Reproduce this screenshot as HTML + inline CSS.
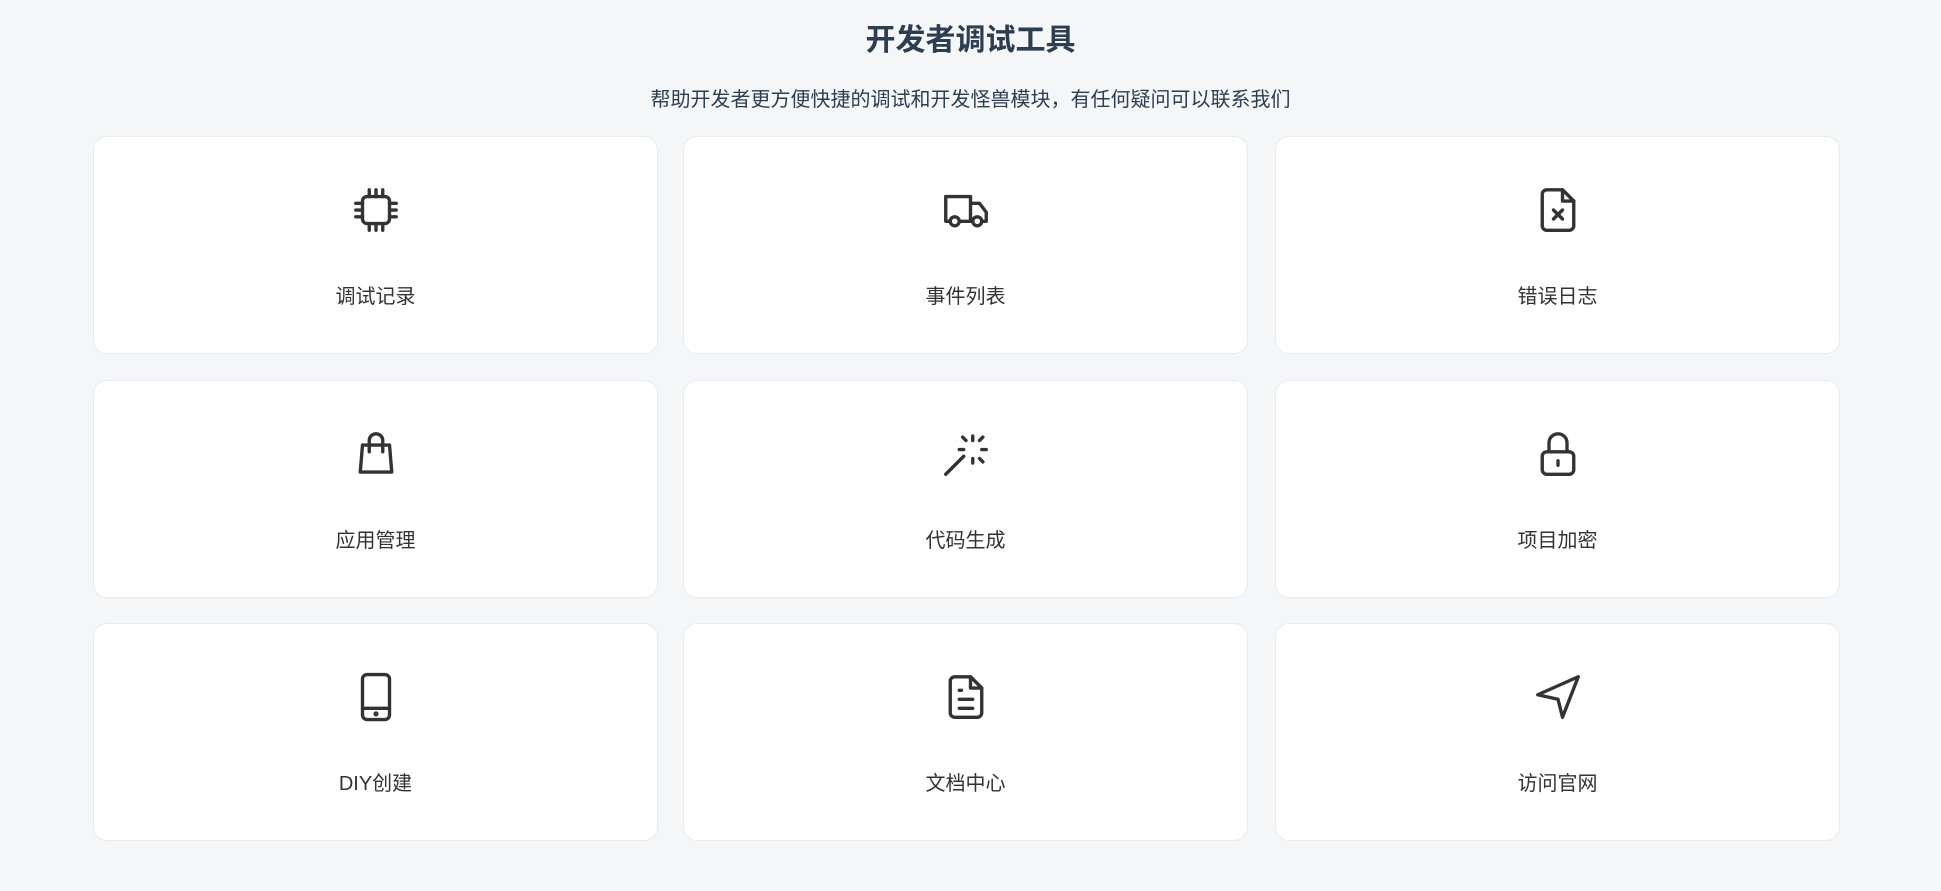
<!DOCTYPE html>
<html><head><meta charset="utf-8"><style>
html,body{margin:0;padding:0;background:#f5f6f8;width:1941px;height:891px;overflow:hidden;font-family:"Liberation Sans","Noto Sans CJK SC",sans-serif}
h1{position:absolute;left:0;width:1941px;top:20px;margin:0;text-align:center;font-size:30px;line-height:42px;font-weight:bold;color:#2c3e50}
.sub{position:absolute;left:0;width:1941px;top:87px;text-align:center;font-size:20px;line-height:26px;color:#2c3e50}
.card{position:absolute;width:565px;height:218px;background:#fff;border:1px solid #e8eaee;border-radius:14px;box-sizing:border-box}
.card svg{position:absolute;left:255px;top:46px;width:54px;height:54px}
.card .t{position:absolute;left:0;width:100%;top:146px;text-align:center;font-size:20px;color:#333;line-height:28px}
</style></head><body>
<h1>开发者调试工具</h1>
<div class="sub">帮助开发者更方便快捷的调试和开发怪兽模块，有任何疑问可以联系我们</div>

<div class="card" style="left:93px;top:136px"><svg viewBox="0 0 24 24" fill="none" stroke="#333" stroke-width="1.5" stroke-linecap="round" stroke-linejoin="round"><rect x="6" y="6" width="12" height="12" rx="2"/><path d="M9 3v3M12 3v3M15 3v3M9 18v3M12 18v3M15 18v3M3 9h3M3 12h3M3 15h3M18 9h3M18 12h3M18 15h3"/></svg><div class="t">调试记录</div></div>
<div class="card" style="left:683px;top:136px"><svg viewBox="0 0 24 24" fill="none" stroke="#333" stroke-width="1.5" stroke-linecap="round" stroke-linejoin="round"><path d="M5 17H3V6h11v11M14 9h4l3 4v4h-2M9 17h6"/><circle cx="7" cy="17" r="2"/><circle cx="17" cy="17" r="2"/></svg><div class="t">事件列表</div></div>
<div class="card" style="left:1275px;top:136px"><svg viewBox="0 0 24 24" fill="none" stroke="#333" stroke-width="1.5" stroke-linecap="round" stroke-linejoin="round"><path d="M14 3H7a2 2 0 0 0-2 2v14a2 2 0 0 0 2 2h10a2 2 0 0 0 2-2V8z"/><path d="M14 3v5h5M10 12l4 4M14 12l-4 4"/></svg><div class="t">错误日志</div></div>

<div class="card" style="left:93px;top:380px"><svg viewBox="0 0 24 24" fill="none" stroke="#333" stroke-width="1.5" stroke-linecap="round" stroke-linejoin="round"><path d="M6 8h12l1 12H5z"/><path d="M9 11V6a3 3 0 0 1 6 0v5"/></svg><div class="t">应用管理</div></div>
<div class="card" style="left:683px;top:380px"><svg viewBox="0 0 24 24" fill="none" stroke="#333" stroke-width="1.5" stroke-linecap="round" stroke-linejoin="round"><path d="M3 21l8-8M15 4v2M15 14v2M19 10h2M9 10h2M18 6l1.5-1.5M18 14l1.5 1.5M12 6l-1.5-1.5"/></svg><div class="t">代码生成</div></div>
<div class="card" style="left:1275px;top:380px"><svg viewBox="0 0 24 24" fill="none" stroke="#333" stroke-width="1.5" stroke-linecap="round" stroke-linejoin="round"><rect x="5" y="11" width="14" height="10" rx="2"/><path d="M8 11V7a4 4 0 0 1 8 0v4M12 15v2"/></svg><div class="t">项目加密</div></div>

<div class="card" style="left:93px;top:623px"><svg viewBox="0 0 24 24" fill="none" stroke="#333" stroke-width="1.5" stroke-linecap="round" stroke-linejoin="round"><rect x="6" y="2" width="12" height="20" rx="2"/><path d="M6 17h12"/><circle cx="12" cy="19.5" r="0.4" fill="#333"/></svg><div class="t">DIY创建</div></div>
<div class="card" style="left:683px;top:623px"><svg viewBox="0 0 24 24" fill="none" stroke="#333" stroke-width="1.5" stroke-linecap="round" stroke-linejoin="round"><path d="M14 3H7a2 2 0 0 0-2 2v14a2 2 0 0 0 2 2h10a2 2 0 0 0 2-2V8z"/><path d="M14 3v5h5M9 9h1M9 13h6M9 17h6"/></svg><div class="t">文档中心</div></div>
<div class="card" style="left:1275px;top:623px"><svg viewBox="0 0 24 24" fill="none" stroke="#333" stroke-width="1.5" stroke-linecap="round" stroke-linejoin="round"><path d="M3 11l18-8-7 18-2-8z"/></svg><div class="t">访问官网</div></div>
</body></html>
